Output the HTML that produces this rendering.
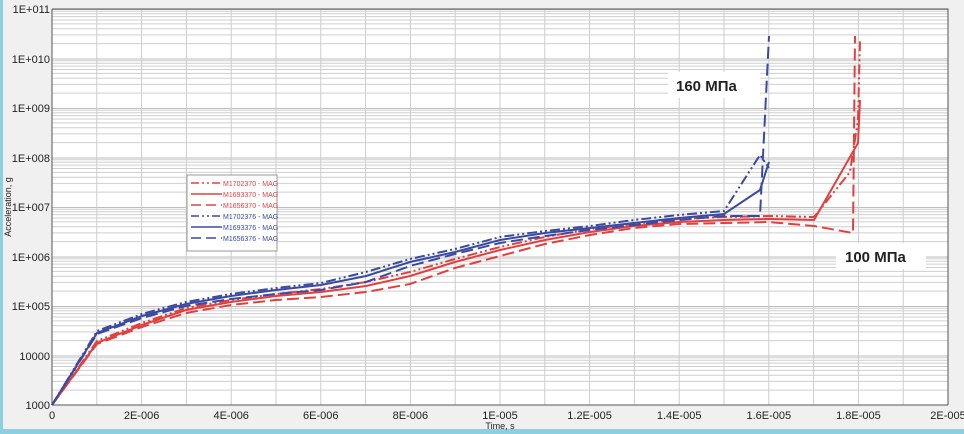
<!DOCTYPE html>
<html><head><meta charset="utf-8"><style>
html,body{margin:0;padding:0;background:#f0f0f0;width:964px;height:434px;overflow:hidden}
</style></head><body>
<svg width="964" height="434" xmlns="http://www.w3.org/2000/svg" font-family="Liberation Sans, sans-serif">
<defs>
<pattern id="lg" x="52" y="9" width="896" height="49.5" patternUnits="userSpaceOnUse">
<g stroke="#cfcfcf" stroke-width="1">
<line x1="0" x2="896" y1="0.5" y2="0.5" stroke="#bdbdbd"/>
<line x1="0" x2="896" y1="2.3" y2="2.3"/>
<line x1="0" x2="896" y1="4.8" y2="4.8"/>
<line x1="0" x2="896" y1="7.6" y2="7.6"/>
<line x1="0" x2="896" y1="11" y2="11"/>
<line x1="0" x2="896" y1="14.9" y2="14.9"/>
<line x1="0" x2="896" y1="19.7" y2="19.7"/>
<line x1="0" x2="896" y1="25.9" y2="25.9"/>
<line x1="0" x2="896" y1="34.6" y2="34.6"/>
</g>
</pattern>
</defs>
<rect x="0" y="0" width="964" height="434" fill="#f0f0f0"/>
<rect x="0" y="0" width="3" height="434" fill="#8ccfe0"/>
<rect x="0" y="429" width="964" height="5" fill="#8ccfe0"/>
<rect x="52" y="9" width="896" height="396" fill="#fff"/>
<rect x="52" y="9" width="896" height="396" fill="url(#lg)"/>
<g stroke="#cccccc" stroke-width="1">
<line x1="96.8" x2="96.8" y1="9" y2="405"/><line x1="141.6" x2="141.6" y1="9" y2="405"/>
<line x1="186.4" x2="186.4" y1="9" y2="405"/><line x1="231.2" x2="231.2" y1="9" y2="405"/>
<line x1="276" x2="276" y1="9" y2="405"/><line x1="320.8" x2="320.8" y1="9" y2="405"/>
<line x1="365.6" x2="365.6" y1="9" y2="405"/><line x1="410.4" x2="410.4" y1="9" y2="405"/>
<line x1="455.2" x2="455.2" y1="9" y2="405"/><line x1="500" x2="500" y1="9" y2="405"/>
<line x1="544.8" x2="544.8" y1="9" y2="405"/><line x1="589.6" x2="589.6" y1="9" y2="405"/>
<line x1="634.4" x2="634.4" y1="9" y2="405"/><line x1="679.2" x2="679.2" y1="9" y2="405"/>
<line x1="724" x2="724" y1="9" y2="405"/><line x1="768.8" x2="768.8" y1="9" y2="405"/>
<line x1="813.6" x2="813.6" y1="9" y2="405"/><line x1="858.4" x2="858.4" y1="9" y2="405"/>
<line x1="903.2" x2="903.2" y1="9" y2="405"/>
</g>
<g stroke="#555" stroke-width="1" fill="none">
<polyline points="52,9 948,9 948,405"/>
<line x1="52" y1="9" x2="52" y2="405"/>
<line x1="52" y1="405" x2="948" y2="405"/>
</g>
<g font-size="11" fill="#222" text-anchor="end">
<text x="50" y="13">1E+011</text><text x="50" y="63">1E+010</text>
<text x="50" y="112">1E+009</text><text x="50" y="162">1E+008</text>
<text x="50" y="211">1E+007</text><text x="50" y="261">1E+006</text>
<text x="50" y="310">1E+005</text><text x="50" y="360">10000</text>
<text x="50" y="409">1000</text>
</g>
<g font-size="11" fill="#222" text-anchor="middle">
<text x="52" y="419">0</text><text x="141.6" y="419">2E-006</text>
<text x="231.2" y="419">4E-006</text><text x="320.8" y="419">6E-006</text>
<text x="410.4" y="419">8E-006</text><text x="500" y="419">1E-005</text>
<text x="589.6" y="419">1.2E-005</text><text x="679.2" y="419">1.4E-005</text>
<text x="768.8" y="419">1.6E-005</text><text x="858.4" y="419">1.8E-005</text>
<text x="948" y="419">2E-005</text>
<text x="500" y="429" font-size="9">Time, s</text>
</g>
<text transform="translate(11,207) rotate(-90)" font-size="9" text-anchor="middle" fill="#222">Acceleration, g</text>
<g fill="none" stroke-width="2">
<polyline stroke="#e04040" stroke-dasharray="10,3,2,3,2,3" points="52,405 97,341 142,323 186,308 231,300 276,294 321,289 366,282 410,272 455,259 500,247 545,237 590,229 634,224 679,219 724,217 769,216 814,217 850,172 858,120 860,40"/>
<polyline stroke="#e04040" points="52,405 97,343 142,325 186,310 231,302 276,296 321,292 366,286 410,276 455,262 500,250 545,240 590,232 634,226 679,222 724,220 769,219 814,220 858,143 860,100"/>
<polyline stroke="#e04040" stroke-dasharray="12,5" points="52,405 97,344 142,327 186,313 231,305 276,300 321,297 366,292 410,284 455,268 500,256 545,244 590,235 634,228 679,224 724,223 769,222 814,226 853,233 855,36"/>
<polyline stroke="#3a4aa0" stroke-dasharray="10,3,2,3,2,3" points="52,405 97,331 142,314 186,302 231,294 276,288 321,283 366,272 410,259 455,249 500,237 545,231 590,226 634,220 679,215 724,211 760,155 769,168"/>
<polyline stroke="#3a4aa0" points="52,405 97,333 142,316 186,304 231,296 276,290 321,285 366,276 410,262 455,252 500,240 545,233 590,228 634,223 679,218 724,214 760,190 769,162"/>
<polyline stroke="#3a4aa0" stroke-dasharray="12,5" points="52,405 97,334 142,318 186,306 231,299 276,294 321,290 366,282 410,266 455,254 500,243 545,236 590,230 634,225 679,220 724,216 760,216 769,36"/>
</g>
<rect x="187" y="175" width="90" height="76" fill="#fff" stroke="#999" stroke-width="1"/>
<g stroke-width="1.6" fill="none">
<line x1="191" x2="222" y1="183" y2="183" stroke="#e04040" stroke-dasharray="8,3,2,3,2,3"/>
<line x1="191" x2="222" y1="194" y2="194" stroke="#e04040"/>
<line x1="191" x2="222" y1="205" y2="205" stroke="#e04040" stroke-dasharray="10,5"/>
<line x1="191" x2="222" y1="216" y2="216" stroke="#3a4aa0" stroke-dasharray="8,3,2,3,2,3"/>
<line x1="191" x2="222" y1="227" y2="227" stroke="#3a4aa0"/>
<line x1="191" x2="222" y1="238" y2="238" stroke="#3a4aa0" stroke-dasharray="10,5"/>
</g>
<g font-size="7">
<text x="223" y="186" fill="#e04040">M1702370 - MAG</text>
<text x="223" y="197" fill="#e04040">M1693370 - MAG</text>
<text x="223" y="208" fill="#e04040">M1656370 - MAG</text>
<text x="223" y="219" fill="#3a4aa0">M1702376 - MAG</text>
<text x="223" y="230" fill="#3a4aa0">M1693376 - MAG</text>
<text x="223" y="241" fill="#3a4aa0">M1656376 - MAG</text>
</g>
<rect x="668" y="72" width="92" height="26" fill="#fff"/>
<text x="676" y="91" font-size="15" font-weight="bold" fill="#222">160 МПа</text>
<rect x="836" y="243" width="90" height="26" fill="#fff"/>
<text x="845" y="262" font-size="15" font-weight="bold" fill="#222">100 МПа</text>
</svg>
</body></html>
